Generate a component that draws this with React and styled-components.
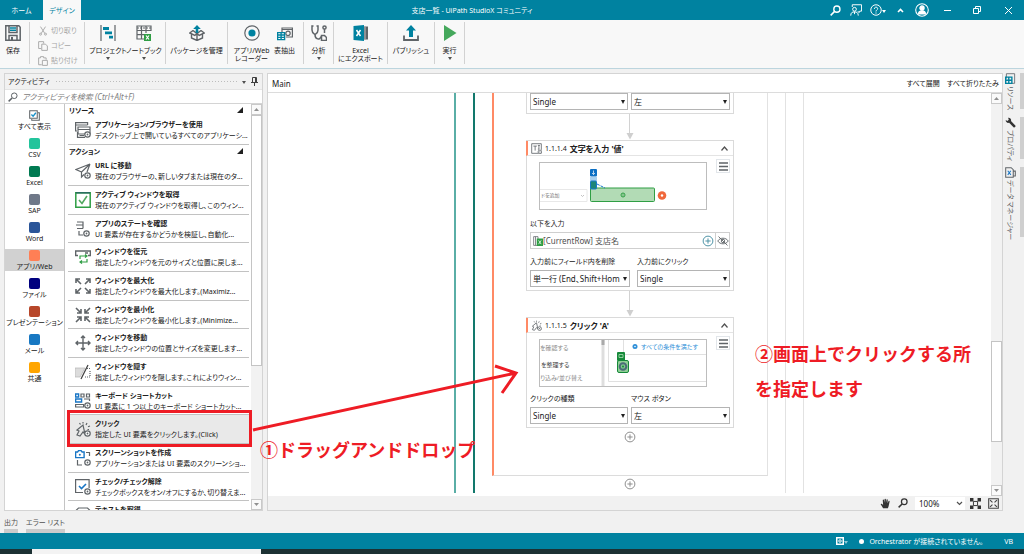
import React from "react";
import styled, { createGlobalStyle } from "styled-components";

const teal = "#0082a0";
const gris = "#5f6468";
const borde = "#d4d4d4";
const rojo = "#ee1c25";
const verde = "#2f9e44";

const GlobalStyle = createGlobalStyle`
  * { box-sizing: border-box; }
  body { margin: 0; background: #f1f1f1; }
  body, button, input, select {
    font-family: "Noto Sans", "Noto Sans CJK JP", sans-serif;
    font-size: 7px;
    line-height: 11px;
    font-feature-settings: "palt";
    color: #202020;
  }
  input, select { font-size: 8px; }
  button {
    border: 0;
    padding: 0;
    background: none;
  }
  ul { list-style: none; margin: 0; padding: 0; }
  svg { display: block; flex: none; }
`;

const Window = styled.div`
  position: relative;
  display: flex;
  flex-direction: column;
  height: 100vh;
  overflow: hidden;
  white-space: nowrap;
`;

/* ---------- title bar ---------- */

const TitleBar = styled.header`
  display: flex;
  align-items: stretch;
  flex: none;
  height: 20px;
  background: ${teal};
`;

const Tab = styled.button`
  width: ${(props) => (props.$active ? "38px" : "43px")};
  padding-top: 1px;
  color: ${(props) => (props.$active ? teal : "white")};
  background: ${(props) => (props.$active ? "#f8f8f8" : "transparent")};
`;

const Title = styled.div`
  flex: 1;
  padding-left: 38px;
  text-align: center;
  line-height: 21px;
  color: white;
`;

const WindowTools = styled.div`
  display: flex;
  align-items: center;
`;

const WindowButton = styled.button`
  display: flex;
  align-items: center;
  justify-content: center;
  width: ${(props) => props.$w}px;
  height: 20px;
`;

/* ---------- ribbon ---------- */

const Ribbon = styled.div`
  display: flex;
  flex: none;
  height: 49px;
  padding-top: 2px;
  background: #f8f8f8;
  border-bottom: 1px solid #bcd5de;
`;

const Group = styled.div`
  display: flex;
  width: ${(props) => props.$w}px;
  height: 42px;
  padding: ${(props) => props.$pad || "0"};
  border-right: 1px solid #d2d2d2;
`;

const ToolButton = styled.button`
  display: flex;
  flex: 1;
  flex-direction: column;
  align-items: center;
  min-width: 0;
  padding-top: 3px;
  line-height: 8px;
  svg { margin-bottom: 6px; }
`;

const Caret = styled.i`
  margin-top: 2px;
  border: 2px solid transparent;
  border-top: 3px solid ${(props) => props.$color || "#505050"};
  border-bottom: 0;
`;

const ClipGroup = styled.div`
  display: flex;
  flex-direction: column;
  gap: 4px;
  padding: 3px 0 0 8px;
  button {
    display: flex;
    align-items: center;
    gap: 3px;
    color: #a6a6a6;
  }
`;

/* ---------- docks ---------- */

const Workspace = styled.div`
  display: flex;
  flex: 1;
  min-height: 0;
  padding: 4px 0 0 4px;
`;

const Dock = styled.aside`
  display: flex;
  flex-direction: column;
  flex: none;
  width: 259px;
  margin-right: 4px;
  background: white;
  border: 1px solid ${borde};
`;

const DockHeader = styled.div`
  display: flex;
  align-items: center;
  gap: 5px;
  height: 15px;
  padding: 0 4px 0 3px;
  background: #f1f1f1;
`;

const Grip = styled.div`
  flex: 1;
  height: 4px;
  background: radial-gradient(circle, #bdbdbd 28%, transparent 36%) 0 0 / 3px 3px;
`;

const SearchBox = styled.label`
  display: flex;
  align-items: center;
  gap: 4px;
  height: 15px;
  padding-left: 3px;
  border-bottom: 1px solid ${borde};
  border-top: 1px solid #e4e4e4;
  input {
    flex: 1;
    min-width: 0;
    height: 12px;
    border: 0;
    padding: 0;
    outline: 0;
    background: transparent;
    font-style: italic;
  }
  input::placeholder { color: #808080; }
`;

const DockBody = styled.div`
  display: flex;
  flex: 1;
  min-height: 0;
`;

const Categories = styled.ul`
  display: flex;
  flex-direction: column;
  gap: 6px;
  width: 60px;
  padding-top: 5px;
  border-right: 1px solid #c4c4c4;
`;

const CategoryButton = styled.button`
  display: flex;
  flex-direction: column;
  align-items: center;
  width: 100%;
  height: 22px;
  padding-top: 1px;
  background: ${(props) => (props.$active ? "#d1d1d1" : "transparent")};
`;

const Swatch = styled.span`
  flex: none;
  width: 11px;
  height: 11px;
  border-radius: 2px;
  background: ${(props) => props.$color};
`;

const Activities = styled.div`
  flex: 1;
  min-width: 0;
  overflow: hidden;
  padding: 0 2px 0 3px;
`;

const Section = styled.h3`
  display: flex;
  align-items: center;
  justify-content: space-between;
  height: 12px;
  margin: 0;
  padding: 0 6px 0 1px;
  font-size: 7px;
  font-weight: 700;
`;

const Corner = styled.i`
  border: 3px solid #202020;
  border-top-color: transparent;
  border-left-color: transparent;
`;

const Activity = styled.li`
  height: 29px;
  border-bottom: 1px solid #c2c2c2;
  background: ${(props) => (props.$active ? "#e9e9e9" : "transparent")};
  &:nth-child(3n) { height: 28px; }
  button {
    display: flex;
    align-items: center;
    gap: 4px;
    width: 100%;
    height: 28px;
    padding-left: 7px;
    text-align: left;
  }
  strong {
    display: block;
    font-weight: 700;
  }
`;

const ScrollBar = styled.div`
  display: flex;
  flex-direction: column;
  flex: none;
  width: 11px;
  background: #f2f2f2;
  button {
    display: flex;
    align-items: center;
    justify-content: center;
    flex: none;
    height: 11px;
    border: 1px solid #c9c9c9;
    background: #fafafa;
  }
`;

const Thumb = styled.div`
  flex: ${(props) => props.$size} 1 0;
  background: white;
  border: 1px solid #c4c4c4;
`;

const Space = styled.div`
  flex: ${(props) => props.$size} 1 0;
`;

/* ---------- designer ---------- */

const Designer = styled.main`
  display: flex;
  flex: 1;
  flex-direction: column;
  min-width: 0;
  background: white;
  border: 1px solid ${borde};
`;

const Crumbs = styled.div`
  display: flex;
  align-items: center;
  gap: 7px;
  flex: none;
  height: 19px;
  padding: 0 3px 0 4px;
  border-bottom: 1px solid #dcdcdc;
  span { flex: 1; font-size: 8px; }
`;

const CanvasRow = styled.div`
  display: flex;
  flex: 1;
  min-height: 0;
`;

const Canvas = styled.div`
  flex: 1;
  min-width: 0;
  padding: 0 2px 3px 0;
  overflow: hidden;
`;

const Scope = styled.div`
  width: ${(props) => props.$w || "auto"};
  height: ${(props) => props.$h || "100%"};
  margin: 0 auto;
  padding: 0 17px;
  border-left: 2px solid ${(props) => props.$color};
  border-right: 1px solid #e2e2e2;
  border-bottom: ${(props) => (props.$closed ? "1px solid #dcdcdc" : "0")};
`;

const Steps = styled.div`
  display: flex;
  flex-direction: column;
  align-items: center;
  height: 382px;
`;

const Card = styled.section`
  width: 208px;
  background: white;
  border: 1px solid #dadada;
  border-top-width: ${(props) => (props.$cut ? "0" : "1px")};
`;

const CardHeader = styled.header`
  display: flex;
  align-items: center;
  gap: 3px;
  height: 15px;
  margin-left: -1px;
  padding: 0 5px 0 3px;
  border-left: 2px solid #ff8a65;
  border-bottom: 1px solid #e4e4e4;
  strong { flex: 1; font-size: 8px; font-weight: 700; }
`;

const CardBody = styled.div`
  padding: ${(props) => (props.$cut ? "0" : "3px")} 3px 3px;
`;

const Preview = styled.div`
  display: flex;
  justify-content: flex-end;
  align-items: flex-start;
  gap: 9px;
  margin-bottom: ${(props) => props.$gap}px;
  svg.shot { margin-top: 3px; border: 1px solid #bdbdbd; }
`;

const MenuButton = styled.button`
  display: flex;
  align-items: center;
  justify-content: center;
  width: 14px;
  height: 14px;
  border: 1px solid #e2e6ea;
`;

const Fields = styled.div`
  display: grid;
  grid-template-columns: ${(props) => props.$cols || "98px 99px"};
  justify-content: space-between;
`;

const Field = styled.label`
  display: block;
  min-width: 0;
`;

const Caption = styled.span`
  display: block;
  height: 14px;
`;

const SelectBox = styled.span`
  position: relative;
  display: block;
  select {
    display: block;
    appearance: none;
    width: 100%;
    height: 17px;
    padding: 0 8px 0 2px;
    border: 1px solid #b4b4b4;
    border-radius: 0;
    background: white;
  }
  &::after {
    content: "";
    position: absolute;
    top: 7px;
    right: 3px;
    border: 2px solid transparent;
    border-top: 4px solid #202020;
    border-bottom: 0;
    pointer-events: none;
  }
`;

const ValueRow = styled.div`
  display: flex;
  align-items: center;
  height: 17px;
  margin-bottom: 7px;
  padding-left: 2px;
  border: 1px solid #cfcfcf;
  input {
    flex: 1;
    min-width: 0;
    padding: 0;
    border: 0;
    color: #505050;
    background: transparent;
  }
  button {
    display: flex;
    align-items: center;
    justify-content: center;
    width: 14px;
    height: 15px;
  }
  button:last-child { border-left: 1px solid #cfcfcf; }
`;

const AddButton = styled.button`
  display: flex;
  justify-content: center;
  width: 12px;
  margin: ${(props) => props.$margin};
`;

const ZoomBar = styled.footer`
  display: flex;
  align-items: center;
  justify-content: flex-end;
  gap: 7px;
  flex: none;
  height: 14px;
  padding-right: 3px;
  background: #f1f1f1;
  select {
    appearance: none;
    width: 50px;
    height: 13px;
    padding: 0 4px;
    border: 0;
    background: white;
  }
`;

const ZoomSelect = styled.label`
  display: flex;
  align-items: center;
  background: white;
  svg { margin-left: -9px; }
`;

const SideTabs = styled.nav`
  display: flex;
  flex-direction: column;
  gap: 8px;
  flex: none;
  width: 21px;
`;

const SideTab = styled.button`
  display: flex;
  align-items: center;
  gap: 2px;
  height: ${(props) => props.$h}px;
  padding-right: 2px;
  writing-mode: vertical-rl;
  text-orientation: sideways;
  border-right: 4px solid #cfcfcf;
  color: #606060;
`;

const OutputTabs = styled.nav`
  display: flex;
  gap: 8px;
  flex: none;
  height: 22px;
  padding: 6px 0 0 4px;
  button {
    height: 16px;
    padding-bottom: 5px;
    border-bottom: 4px solid #cbcbcb;
    color: #505050;
  }
`;

const StatusBar = styled.footer`
  display: flex;
  align-items: center;
  justify-content: flex-end;
  flex: none;
  height: 16px;
  padding-right: 11px;
  background: ${teal};
  color: white;
  span { margin: 0 21px 0 5px; }
`;

const Dot = styled.i`
  width: 5px;
  height: 5px;
  margin-left: 11px;
  border-radius: 50%;
  background: white;
`;

const TaskBar = styled.div`
  flex: none;
  height: 5px;
  padding-left: 32px;
  background: #1c3133;
  div {
    width: 229px;
    height: 5px;
    background: #f3f3f3;
  }
`;

/* ---------- notes drawn over the window ---------- */

const Frame = styled.div`
  position: absolute;
  left: 67px;
  top: 410px;
  width: 185px;
  height: 37px;
  border: 3px solid ${rojo};
`;

const Arrow = styled.svg`
  position: absolute;
  left: 250px;
  top: 360px;
`;

const Note = styled.p`
  position: absolute;
  left: ${(props) => props.$x}px;
  top: ${(props) => props.$y}px;
  margin: 0;
  font-family: "Noto Sans CJK JP", sans-serif;
  font-size: 18px;
  font-weight: 700;
  line-height: 35px;
  font-feature-settings: normal;
  color: ${rojo};
`;

/* ---------- icons ---------- */

const Svg = ({ s = 16, w, h, box, children, c = gris, sw = 1.2, ...rest }) => (
  <svg
    width={w || s}
    height={h || s}
    viewBox={box || "0 0 16 16"}
    fill="none"
    stroke={c}
    strokeWidth={sw}
    {...rest}
  >
    {children}
  </svg>
);

const Gear = ({ x = 12.5, y = 12.5 }) => (
  <g>
    <circle cx={x} cy={y} r="2.7" fill="white" />
    <circle cx={x} cy={y} r="0.9" fill={gris} stroke="none" />
  </g>
);

const icons = {
  save: (
    <Svg sw="1.5">
      <path d="M.8.8h13l1.4 1.4v13H.8z" />
      <path d="M4 1v6.5h8V1M4 15v-4.5h8V15" />
      <path d="M5 3h6M5 5.2h6" stroke={teal} />
      <path d="M6 12h2v3H6z" fill={gris} stroke="none" />
    </Svg>
  ),
  project: (
    <Svg>
      <path d="M1 0v16M15 0v16" />
      <path d="M3 3.500h6M5 7.800h7M9 12.200h4" stroke={teal} strokeWidth="2.800" />
    </Svg>
  ),
  notebook: (
    <Svg>
      <path d="M1 1h14v4.500H1zM1 5.500V14h7M1 9.700h8M5.500 1v13M10 1v7" />
      <path d="M1 3h14" strokeDasharray="2 1" />
      <path d="M8 9h7v7H8z" fill={verde} stroke="none" />
      <path d="M10 10.500l3 4M13 10.500l-3 4" stroke="white" />
    </Svg>
  ),
  packages: (
    <Svg sw="1.400">
      <path d="M2.500 9.500V13L8 15.500l5.500-2.500V9.500M8 9.500v6M4 5.500L.8 8l5 2.500L8 8.500l2.200 2L15.200 8 12 5.500M4 5.500l4 3 4-3" />
      <path d="M8 8V4" stroke={teal} strokeWidth="2.600" />
      <path d="M8 0l3.800 4H4.200z" fill={teal} stroke="none" />
    </Svg>
  ),
  recorder: (
    <Svg>
      <circle cx="8" cy="8" r="7.200" />
      <circle cx="8" cy="8" r="3.600" fill={teal} stroke="none" />
    </Svg>
  ),
  table: (
    <Svg>
      <path d="M5 7V3h10.400v9H9M5 4.500h10" />
      <circle cx="11" cy="8.300" r="2.200" />
      <path d="M.6 7.600h7v7H.6zM.6 10h7M.6 12.400h7M4.100 7.600v7" stroke={teal} strokeWidth="1.400" fill="white" />
    </Svg>
  ),
  analyze: (
    <Svg sw="1.500">
      <path d="M2.500 1H1v4c0 3 1.500 3.500 3 4.500C5.500 8.500 7 8 7 5V1H5.500M4 9.500c0 5 5 6 6 2" />
      <circle cx="13.500" cy="2.500" r="1.600" />
      <path d="M13.500 4v4M10.500 10.500h3l2 2v3h-5z" />
    </Svg>
  ),
  excel: (
    <Svg>
      <path d="M9 1.500h6v13H9z" fill="#606468" stroke="none" />
      <path d="M12 2v12" stroke="white" strokeWidth=".6" />
      <path d="M.5 1L11 0v16L.5 15z" fill={teal} stroke="none" />
      <path d="M3.500 5l4 6M7.500 5l-4 6" stroke="white" strokeWidth="1.500" />
    </Svg>
  ),
  publish: (
    <Svg>
      <path d="M1 10.500V15h14v-4.500" strokeWidth="1.800" />
      <path d="M8 0l5 5.500h-3V12H6V5.500H3z" fill={teal} stroke="none" />
    </Svg>
  ),
  run: (
    <Svg>
      <path d="M2 0l12.500 8L2 16z" fill="#45a85c" stroke="none" />
    </Svg>
  ),
  cut: (
    <Svg s="10" c="#a8a8a8" sw="1.500">
      <path d="M4 1l7 11M12 1L5 12" />
      <circle cx="4" cy="13" r="1.600" />
      <circle cx="12" cy="13" r="1.600" />
    </Svg>
  ),
  copy: (
    <Svg s="10" c="#a8a8a8" sw="1.500">
      <path d="M5 12H1V1h8v3M6 5h6l3 3v7H6z" />
    </Svg>
  ),
  paste: (
    <Svg s="10" c="#a8a8a8" sw="1.500">
      <path d="M6 14H1V3h3V1h5v2h4v3M7 7h8v8H7z" />
    </Svg>
  ),
  app: (
    <Svg>
      <path d="M2 9H.6V.6h12V3M.6 3h12M3 5h12v7H3zM3 7.500h12" />
      <path d="M2.500 10v5.400H10M4.500 13.500H9" />
      <Gear />
    </Svg>
  ),
  url: (
    <Svg>
      <path d="M15 1L1 6.500l5.500 2.500M15 1l-3 8M15 1L6.500 9v5l2.500-2.500" />
      <Gear />
    </Svg>
  ),
  active: (
    <Svg>
      <path d="M.8.8h14.400v14.400H.8z" stroke={verde} strokeWidth="1.500" />
      <path d="M4 8l3 3.500L12 4" stroke="#51a85f" strokeWidth="1.600" />
      <path d="M.8.8h14.400" stroke="#2b6d61" strokeWidth="1.500" />
    </Svg>
  ),
  state: (
    <Svg>
      <path d="M2 1h6v6.500M1 4h7M2 7.500h6M4 10v4h4" />
      <Gear x={11.500} y={12.500} />
    </Svg>
  ),
  restore: (
    <Svg>
      <path d="M3 6.500H.6V2h14.800v4.500H13M10 4h3" strokeWidth="1.500" />
      <path d="M5 10V7h7M10 5.500L12 7l-2 1.600M12 10v3H5M7 11.500L5 13l2 1.600" stroke={verde} />
    </Svg>
  ),
  max: (
    <Svg sw="1.600">
      <path d="M6 6L1 1M1 5V1h4M10 6l5-5M11 1h4v4M6 10l-5 5M1 11v4h4M10 10l5 5M15 11v4h-4" />
    </Svg>
  ),
  min: (
    <Svg sw="1.600">
      <path d="M1 1l5 5M6 2v4H2M15 1l-5 5M10 2v4h4M1 15l5-5M2 10h4v4M15 15l-5-5M14 10h-4v4" />
    </Svg>
  ),
  move: (
    <Svg sw="1.400">
      <path d="M8 1v14M1 8h14M6 3l2-2 2 2M6 13l2 2 2-2M3 6L1 8l2 2M13 6l2 2-2 2" />
    </Svg>
  ),
  hide: (
    <Svg>
      <path d="M0 4h10L5 13H0z" fill="#dcdcdc" stroke="#b5b5b5" strokeWidth=".7" />
      <path d="M13 1L6 15" stroke="#404040" />
      <path d="M12 4.500h3M15 7v5M10 13h5" strokeDasharray="1 1" />
    </Svg>
  ),
  keyboard: (
    <Svg>
      <path d="M.6 1h3v3h-3zM.6 6h6v3h-6z" stroke="#1976c5" strokeWidth="1.400" />
      <path d="M6 1h3v3H6zM11.500 1h3v3h-3zM9 6h5.500v2M.6 11.500h8v2.500h-8z" />
      <Gear />
    </Svg>
  ),
  click: (
    <Svg>
      <path d="M2 9l6-5 2 9-2-2-3 4-3-1 2-4zM8 1v1.500M12 2l-1 2M15 5l-2 .8M14 8.500h-1.500M4.500 2l1 1.500" />
      <Gear />
    </Svg>
  ),
  shot: (
    <Svg>
      <path d="M.6 2h2l1-1.400h2.500l1 1.400h2v5.600H.6z" stroke="#1976c5" strokeWidth="1.400" />
      <circle cx="4.800" cy="4.800" r="1" fill="#1976c5" stroke="none" />
      <path d="M11 2.500h3.500V6M2.500 10v5H7" />
      <Gear />
    </Svg>
  ),
  check: (
    <Svg>
      <path d="M8 13.500H.6V.6h13.500V9" />
      <path d="M4 7l2.500 2.500L11 5" stroke="#1976c5" strokeWidth="1.600" />
      <Gear />
    </Svg>
  ),
  text: (
    <Svg>
      <path d="M1 14V3.500L3.500 1h9L15 3.500V14" />
    </Svg>
  ),
};

const Magnifier = ({ s = 10, c = gris, sw = 1.6 }) => (
  <Svg s={s} c={c} sw={sw}>
    <circle cx="10" cy="6" r="4.500" />
    <path d="M6.500 9.500L1 15" strokeWidth="2.400" />
  </Svg>
);

const Chevron = ({ up, c = "#505050" }) => (
  <Svg w={7} h={5} box="0 0 7 5" c={c}>
    <path d={up ? "M.5 4.500l3-3.500 3 3.500" : "M1 1l2.500 2.500L6 1"} />
  </Svg>
);

const ScrollTip = ({ up }) => (
  <Svg w={5} h={3} box="0 0 5 3" c="none">
    <path d={up ? "M0 3l2.500-3L5 3z" : "M0 0l2.500 3L5 0z"} fill="#909090" />
  </Svg>
);

const Plus = ({ c = "#8c8c8c", s = 12 }) => (
  <Svg s={s} c={c} sw="1.300">
    <circle cx="8" cy="8" r="6.500" />
    <path d="M8 4.500v7M4.500 8h7" />
  </Svg>
);

const Connector = () => (
  <Svg w={8} h={26} box="0 0 8 26" c="#d2d2d2" sw="1">
    <path d="M3.500 0v21" />
    <path d="M.5 19h7L4 25.500z" fill="#cfcfcf" stroke="none" />
  </Svg>
);

const Hamburger = () => (
  <Svg w={9} h={9} box="0 0 9 9" sw="1.500">
    <path d="M0 1h9M0 4.500h9M0 8h9" />
  </Svg>
);

/* ---------- data ---------- */

const categories = [
  ["すべて表示", null],
  ["CSV", "#23c49c"],
  ["Excel", "#007a52"],
  ["SAP", "#6f7888"],
  ["Word", "#2a5599"],
  ["アプリ/Web", "#ff7f55"],
  ["ファイル", "#00007f"],
  ["プレゼンテーション", "#b7472a"],
  ["メール", "#1878c2"],
  ["共通", "#ffa500"],
];

const actions = [
  ["url", "URL に移動", "現在のブラウザーの、新しいタブまたは現在のタ..."],
  ["active", "アクティブ ウィンドウを取得", "現在のアクティブ ウィンドウを取得し、このウィン..."],
  ["state", "アプリのステートを確認", "UI 要素が存在するかどうかを検証し、自動化..."],
  ["restore", "ウィンドウを復元", "指定したウィンドウを元のサイズと位置に戻しま..."],
  ["max", "ウィンドウを最大化", "指定したウィンドウを最大化します。(Maximiz..."],
  ["min", "ウィンドウを最小化", "指定したウィンドウを最小化します。(Minimize..."],
  ["move", "ウィンドウを移動", "指定したウィンドウの位置とサイズを変更します..."],
  ["hide", "ウィンドウを隠す", "指定したウィンドウを隠します。これによりウィン..."],
  ["keyboard", "キーボード ショートカット", "UI 要素に 1 つ以上のキーボード ショートカット..."],
  ["click", "クリック", "指定した UI 要素をクリックします。(Click)"],
  ["shot", "スクリーンショットを作成", "アプリケーションまたは UI 要素のスクリーンショ..."],
  ["check", "チェック/チェック解除", "チェックボックスをオン/オフにするか、切り替えま..."],
  ["text", "テキストを取得", ""],
];

/* ---------- parts ---------- */

const ActivityItem = ({ icon, title, text }) => (
  <Activity $active={icon === "click"}>
    <button>
      {icons[icon]}
      <span>
        <strong>{title}</strong>
        {text || "\u00a0"}
      </span>
    </button>
  </Activity>
);

const Tool = ({ icon, lines, menu }) => (
  <ToolButton>
    {icons[icon]}
    {lines.map((line) => (
      <span key={line}>{line}</span>
    ))}
    {menu && <Caret />}
  </ToolButton>
);

const Dropdown = ({ label, name, value }) => (
  <Field>
    {label && <Caption>{label}</Caption>}
    <SelectBox>
      <select aria-label={label || name} defaultValue={value}>
        <option>{value}</option>
      </select>
    </SelectBox>
  </Field>
);

const Header = () => (
  <TitleBar>
    <Tab>ホーム</Tab>
    <Tab $active>デザイン</Tab>
    <Title>支店一覧 - UiPath StudioX コミュニティ</Title>
    <WindowTools>
      <WindowButton $w={20} aria-label="検索">
        <Magnifier c="white" s={11} sw={2} />
      </WindowButton>
      <WindowButton $w={22} aria-label="フィードバック">
        <Svg s={12} c="white" sw="1.300">
          <path d="M3 4V1h12.400v8.500H13l-1 2-1.500-2M1 15.500c0-4 2-5 5-5s5 1 5 5M6 10.500v3" />
          <circle cx="6" cy="7" r="2.500" />
        </Svg>
      </WindowButton>
      <WindowButton $w={22} aria-label="ヘルプ">
        <Svg s={12} c="white" sw="1.300">
          <circle cx="8" cy="8" r="7" />
          <path d="M5.800 6.500c0-3 4.400-3 4.400-.3C10.200 8 8 8 8 10M8 11.300v1.500" />
        </Svg>
        <Caret $color="white" />
      </WindowButton>
      <WindowButton $w={22} aria-label="リボン">
        <Svg w={7} h={5} box="0 0 7 5" c="white" sw="1.600">
          <path d="M1 4l2.500-2.500L6 4" />
        </Svg>
      </WindowButton>
      <WindowButton $w={22} aria-label="アカウント">
        <Svg s={14} c="white">
          <circle cx="8" cy="8" r="7.200" />
          <circle cx="8" cy="5.800" r="2.500" fill="white" />
          <path d="M4 12.500c0-3 2-3.500 4-3.500s4 .5 4 3.500z" fill="white" />
        </Svg>
      </WindowButton>
      <WindowButton $w={28} aria-label="最小化">
        <Svg w={7} h={7} box="0 0 7 7" c="white" sw="1">
          <path d="M0 3.500h7" />
        </Svg>
      </WindowButton>
      <WindowButton $w={32} aria-label="元に戻す">
        <Svg w={8} h={8} box="0 0 8 8" c="white" sw="1">
          <path d="M.5 2.500h5v5h-5zM2.500 2V.5h5v5H6" />
        </Svg>
      </WindowButton>
      <WindowButton $w={31} aria-label="閉じる">
        <Svg w={7} h={7} box="0 0 7 7" c="white" sw="1">
          <path d="M0 0l7 7M7 0L0 7" />
        </Svg>
      </WindowButton>
    </WindowTools>
  </TitleBar>
);

const Toolbar = () => (
  <Ribbon>
    <Group $w={30} $pad="0 3px 0 0">
      <Tool icon="save" lines={["保存"]} />
    </Group>
    <Group $w={55}>
      <ClipGroup>
        <button>{icons.cut}切り取り</button>
        <button>{icons.copy}コピー</button>
        <button>{icons.paste}貼り付け</button>
      </ClipGroup>
    </Group>
    <Group $w={81} $pad="0 3px 0 5px">
      <Tool icon="project" lines={["プロジェクト"]} menu />
      <Tool icon="notebook" lines={["ノートブック"]} menu />
    </Group>
    <Group $w={62}>
      <Tool icon="packages" lines={["パッケージを管理"]} />
    </Group>
    <Group $w={76} $pad="0 2px 0 7px">
      <Tool icon="recorder" lines={["アプリ/Web", "レコーダー"]} />
      <Tool icon="table" lines={["表抽出"]} />
    </Group>
    <Group $w={30}>
      <Tool icon="analyze" lines={["分析"]} menu />
    </Group>
    <Group $w={54}>
      <Tool icon="excel" lines={["Excel", "にエクスポート"]} />
    </Group>
    <Group $w={47}>
      <Tool icon="publish" lines={["パブリッシュ"]} />
    </Group>
    <Group $w={30}>
      <Tool icon="run" lines={["実行"]} menu />
    </Group>
  </Ribbon>
);

const ActivitiesDock = () => (
  <Dock>
    <DockHeader>
      アクティビティ
      <Grip />
      <Caret />
      <Svg w={7} h={9} box="0 0 7 9" c="#404040" sw="1">
        <path d="M1.500.5h4v5h-4zM0 5.500h7M3.500 6v3M4.500 1v4" />
      </Svg>
    </DockHeader>
    <SearchBox>
      <Magnifier />
      <input aria-label="検索" placeholder="アクティビティを検索 (Ctrl+Alt+F)" />
    </SearchBox>
    <DockBody>
      <Categories>
        {categories.map(([name, color]) => (
          <li key={name}>
            <CategoryButton $active={name === "アプリ/Web"}>
              {color ? (
                <Swatch $color={color} />
              ) : (
                <Svg s={11} sw="1.500">
                  <path d="M1 1h11v11H1zM13 4h2v11H4v-2" />
                  <path d="M3.500 6.500L6 9l4-5" stroke="#1991c9" strokeWidth="2" />
                </Svg>
              )}
              {name}
            </CategoryButton>
          </li>
        ))}
      </Categories>
      <Activities>
        <Section>リソース<Corner /></Section>
        <ul>
          <ActivityItem
            icon="app"
            title="アプリケーション/ブラウザーを使用"
            text="デスクトップ上で開いているすべてのアプリケーシ..."
          />
        </ul>
        <Section>アクション<Corner /></Section>
        <ul>
          {actions.map(([icon, title, text]) => (
            <ActivityItem key={icon} icon={icon} title={title} text={text} />
          ))}
        </ul>
      </Activities>
      <ScrollBar>
        <button aria-label="上へ"><ScrollTip up /></button>
        <Thumb $size={250} />
        <Space $size={134} />
        <button aria-label="下へ"><ScrollTip /></button>
      </ScrollBar>
    </DockBody>
  </Dock>
);

const TypeShot = () => (
  <svg className="shot" width="168" height="48" viewBox="0 0 166 46">
    <path d="M0 26.500h47v12H0" fill="none" stroke="#e8e8e8" />
    <text x="1" y="34" fontSize="5" fill="#777">ドを追加</text>
    <path d="M41 32l1.500 1.500L44 32" fill="none" stroke="#aaa" strokeWidth=".7" />
    <rect x="50.500" y="25" width="64" height="13.500" rx="1" fill="#b2dbb5" stroke={verde} />
    <circle cx="83" cy="32" r="2" fill="none" stroke={verde} />
    <path d="M83 30.500v3" stroke={verde} strokeWidth=".7" />
    <rect x="50" y="6" width="7" height="7.500" rx="1" fill="#0b6fc4" />
    <path d="M53.500 7.500v4M52 10l1.500 1.500L55 10" fill="none" stroke="white" strokeWidth=".7" />
    <rect x="50" y="14" width="7" height="4" fill="#a5cff0" />
    <rect x="50.500" y="18" width="6" height="8" rx="1" fill="#1b8578" stroke="#1678cc" />
    <path d="M57 21l8 4" stroke="#1678cc" strokeDasharray="3 1" />
    <circle cx="122" cy="32.500" r="4.300" fill="#f0683c" />
    <circle cx="122" cy="32.500" r="1.200" fill="white" />
  </svg>
);

const ClickShot = () => (
  <svg className="shot" width="168" height="48" viewBox="0 0 166 46">
    <g fill="#8a8a8a" fontSize="6">
      <text x="0" y="10">を確認する</text>
      <text x="1" y="27" fill="#404040">を整理する</text>
      <text x="0" y="40">り込み/並び替え</text>
    </g>
    <path d="M63 0v46" stroke="#dedede" strokeWidth="3" />
    <path d="M63 0v5" stroke="#aaa" strokeWidth="3" />
    <path d="M68.500 0v41.500H166M83.500 0v14.500H166" fill="none" stroke="#e0e0e0" />
    <circle cx="95" cy="6.500" r="2.500" fill="#2e8fd8" />
    <circle cx="95" cy="6.500" r=".8" fill="white" />
    <text x="101" y="9" fontSize="6" fill="#2e8fd8">すべての条件を満たす</text>
    <rect x="77" y="12" width="8" height="9" rx="1" fill="#16893a" />
    <path d="M79 14.500h4v3h-4z" fill="none" stroke="#a9e0b2" strokeWidth=".8" />
    <rect x="77.500" y="20.500" width="11" height="12" rx="1.500" fill="#8fcf95" stroke="#16893a" />
    <circle cx="83" cy="26.500" r="3.300" fill="#7fc78e" stroke="#4b6b78" strokeWidth="2" />
    <circle cx="83" cy="26.500" r="1" fill="#16893a" />
  </svg>
);

const TypeCard = () => (
  <Card>
    <CardHeader>
      <Svg s={11}>
        <path d="M11 15H1V1h14v9M3.500 4.500h5M6 4.500V11M10 3.500h3M11.500 3.500V9M10 9h2" />
        <Gear x={13} y={13} />
      </Svg>
      1.1.1.4
      <strong>文字を入力 '値'</strong>
      <Chevron up />
    </CardHeader>
    <CardBody>
      <Preview $gap={8}>
        <TypeShot />
        <MenuButton aria-label="オプション"><Hamburger /></MenuButton>
      </Preview>
      <Caption as="label" htmlFor="valor">以下を入力</Caption>
      <ValueRow>
        <Svg s={10}>
          <path d="M1 1h7v14H1zM4 1v14" />
          <path d="M6 4h10v12H6z" fill={verde} stroke="none" />
          <path d="M9 7l4 6M13 7l-4 6" stroke="white" />
        </Svg>
        <input id="valor" defaultValue="[CurrentRow] 支店名" />
        <button aria-label="追加"><Plus c="#4a90a4" /></button>
        <button aria-label="非表示">
          <Svg s={12}>
            <path d="M1 8c3-5 11-5 14 0-3 5-11 5-14 0zM2 2l12 12" />
            <circle cx="8" cy="8" r="2.300" />
          </Svg>
        </button>
      </ValueRow>
      <Fields $cols="100px 93px">
        <Dropdown label="入力前にフィールド内を削除" value="単一行 (End、Shift+Hom" />
        <Dropdown label="入力前にクリック" value="Single" />
      </Fields>
    </CardBody>
  </Card>
);

const ClickCard = () => (
  <Card>
    <CardHeader>
      {React.cloneElement(icons.click, { s: 11 })}
      1.1.1.5
      <strong>クリック 'A'</strong>
      <Chevron up />
    </CardHeader>
    <CardBody>
      <Preview $gap={6}>
        <ClickShot />
        <MenuButton aria-label="オプション"><Hamburger /></MenuButton>
      </Preview>
      <Fields>
        <Dropdown label="クリックの種類" value="Single" />
        <Dropdown label="マウス ボタン" value="左" />
      </Fields>
    </CardBody>
  </Card>
);

const DesignerPanel = () => (
  <Designer>
    <Crumbs>
      <span>Main</span>
      <button>すべて展開</button>
      <button>すべて折りたたみ</button>
    </Crumbs>
    <CanvasRow>
      <Canvas>
        <Scope $w="350px" $color="#5aaea6">
          <Scope $color="#12786c">
            <Scope $color="#ff8a65" $h="auto" $closed>
              <Steps>
                <Card $cut>
                  <CardBody $cut>
                    <Fields>
                      <Dropdown name="クリックの種類" value="Single" />
                      <Dropdown name="マウス ボタン" value="左" />
                    </Fields>
                  </CardBody>
                </Card>
                <Connector />
                <TypeCard />
                <Connector />
                <ClickCard />
                <AddButton $margin="3px 0 0" aria-label="追加"><Plus /></AddButton>
              </Steps>
            </Scope>
            <AddButton $margin="2px auto 0" aria-label="追加"><Plus /></AddButton>
          </Scope>
        </Scope>
      </Canvas>
      <ScrollBar>
        <button aria-label="上へ"><ScrollTip up /></button>
        <Space $size={238} />
        <Thumb $size={99} />
        <Space $size={43} />
        <button aria-label="下へ"><ScrollTip /></button>
      </ScrollBar>
    </CanvasRow>
    <ZoomBar>
      <button aria-label="パン">
        <Svg s={11} c="none">
          <path d="M4.500 15L1 9c0-1 1.500-1 2-.3L4.500 10 4 3c.2-1 1.500-1 1.800 0l.8 4V2c.2-1 1.700-1 2 0v5l1-4.500c.3-1 1.600-.8 1.700.2L11 7.500l1.500-3c.5-.8 1.700-.4 1.500.6L12.500 12l-1 3z" fill="#333" />
        </Svg>
      </button>
      <button aria-label="ズーム"><Magnifier c="#333" sw={2} /></button>
      <ZoomSelect>
        <select aria-label="ズーム" defaultValue="100%">
          <option>100%</option>
        </select>
        <Chevron />
      </ZoomSelect>
      <button aria-label="画面に合わせる">
        <Svg s={11} c="#333" sw="1.400">
          <path d="M5 5h6v6H5z" />
          <path d="M0 0h5v5H0zM11 0h5v5h-5zM0 11h5v5H0zM11 11h5v5h-5z" fill="#333" stroke="none" />
        </Svg>
      </button>
      <button aria-label="概要">
        <Svg s={11} c="#444" sw="1.600">
          <path d="M1 1h14v14H1zM3 3l3.500 3.500M13 3L9.500 6.500M3 13l3.500-3.500M13 13L9.500 9.500" />
        </Svg>
      </button>
    </ZoomBar>
  </Designer>
);

const SidePanel = () => (
  <SideTabs>
    <SideTab $h={36}>
      <Svg s={11}>
        <path d="M2 8V1h12v14H9" />
        <path d="M1 6h9v9H1zM1 10.500h9M5.500 6v9" stroke={teal} strokeWidth="2" />
      </Svg>
      リソース
    </SideTab>
    <SideTab $h={42}>
      <Svg s={11} c="none">
        <path d="M1 4.500l2.500 1.200L5.500 4 4.500 1c3-.5 5 2 4.200 4.700l6.300 6.500c1.200 1.600-1 3.800-2.600 2.600L6 8.500C3.500 9.300 1 7.500 1 4.500z" fill="#333" />
      </Svg>
      プロパティ
    </SideTab>
    <SideTab $h={70}>
      <Svg s={11} sw="1.500">
        <path d="M1 1h8l3 3v11H1zM12 6h3v7h-3" />
        <path d="M4 5.500l4.500 6M8.500 5.500l-4.500 6" stroke="#1976c5" />
      </Svg>
      データ マネージャー
    </SideTab>
  </SideTabs>
);

const App = () => {
  return (
    <>
      <GlobalStyle />
      <Window>
        <Header />
        <Toolbar />
        <Workspace>
          <ActivitiesDock />
          <DesignerPanel />
          <SidePanel />
        </Workspace>
        <OutputTabs>
          <button>出力</button>
          <button>エラー リスト</button>
        </OutputTabs>
        <StatusBar>
          <Svg s={8} c="white" sw="3">
            <path d="M1.500 1.500h13v13h-13z" />
            <circle cx="8" cy="8" r="2.500" strokeWidth="2" />
          </Svg>
          <Caret $color="#8cc6d4" />
          <Dot />
          <span>Orchestrator が接続されていません。</span>
          VB
        </StatusBar>
        <TaskBar><div /></TaskBar>
        <Frame />
        <Arrow width="280" height="80" fill="none" stroke={rojo} strokeWidth="3">
          <path d="M3 70L266 13M245 6l21 7-14 20" />
        </Arrow>
        <Note $x={260} $y={432}>①ドラッグアンドドロップ</Note>
        <Note $x={755} $y={336}>
          ②画面上でクリックする所
          <br />
          を指定します
        </Note>
      </Window>
    </>
  );
};

export default App;
